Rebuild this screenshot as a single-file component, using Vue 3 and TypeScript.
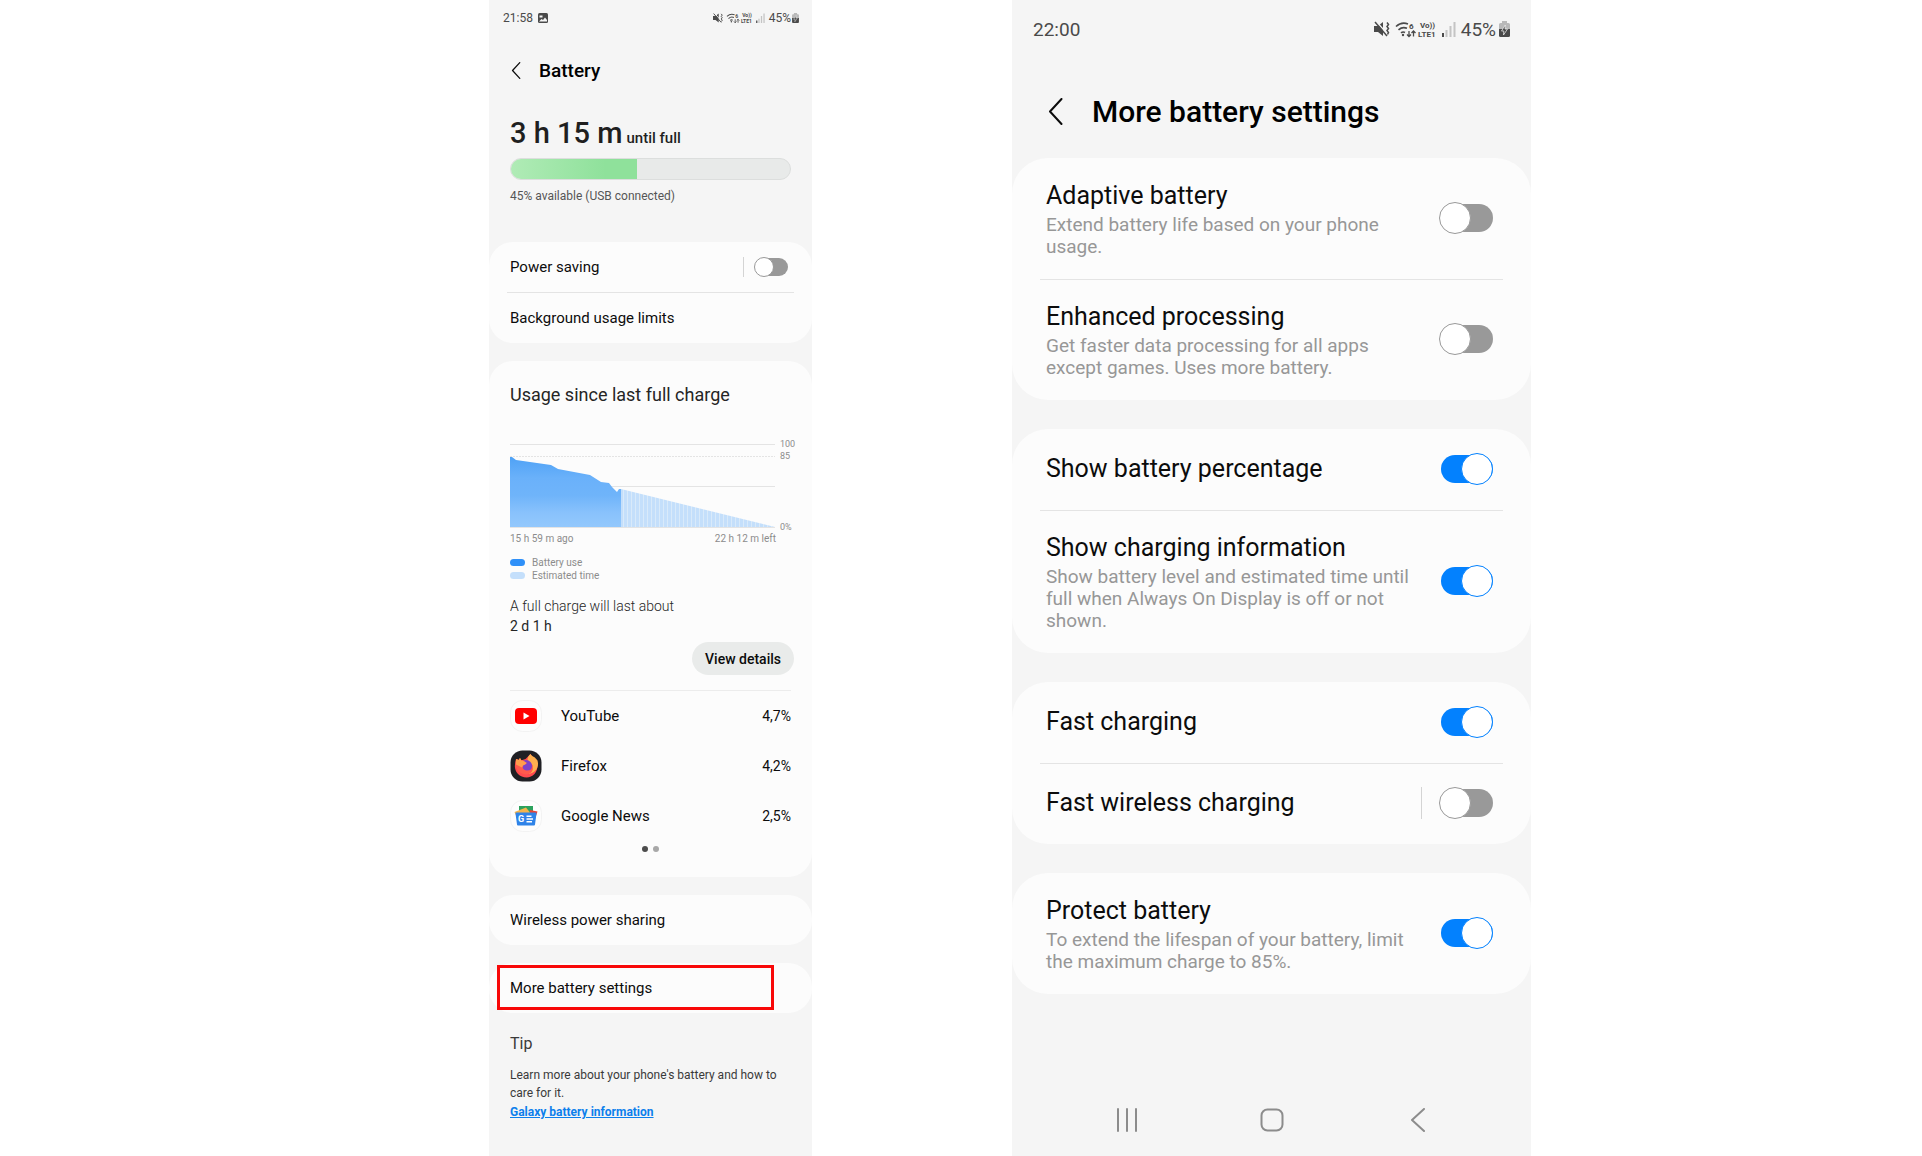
<script setup lang="ts">
import { ref } from 'vue'

interface Setting {
  id: string
  title: string
  detail?: string
  on: boolean
  split?: boolean
}

interface AppUsage {
  id: 'youtube' | 'firefox' | 'news'
  name: string
  share: string
}

const charge = ref(45)
const powerSaving = ref(false)

const apps: AppUsage[] = [
  { id: 'youtube', name: 'YouTube', share: '4,7%' },
  { id: 'firefox', name: 'Firefox', share: '4,2%' },
  { id: 'news', name: 'Google News', share: '2,5%' },
]

const groups = ref<Setting[][]>([
  [
    { id: 'adaptive', title: 'Adaptive battery', detail: 'Extend battery life based on your phone usage.', on: false },
    { id: 'enhanced', title: 'Enhanced processing', detail: 'Get faster data processing for all apps except games. Uses more battery.', on: false },
  ],
  [
    { id: 'percentage', title: 'Show battery percentage', on: true },
    { id: 'charging-info', title: 'Show charging information', detail: 'Show battery level and estimated time until full when Always On Display is off or not shown.', on: true },
  ],
  [
    { id: 'fast', title: 'Fast charging', on: true },
    { id: 'fast-wireless', title: 'Fast wireless charging', on: false, split: true },
  ],
  [
    { id: 'protect', title: 'Protect battery', detail: 'To extend the lifespan of your battery, limit the maximum charge to 85%.', on: true },
  ],
])
</script>

<template>
  <div class="page">
    <svg class="defs" aria-hidden="true">
      <symbol id="signals" viewBox="0 0 82 18">
        <path d="M0 6h4l5-4v14l-5-4H0z" fill="#4a4a4a" />
        <path d="M2 1l12 14" stroke="#f5f5f5" stroke-width="1.500" />
        <path d="M1 2l12 14" stroke="#4a4a4a" stroke-width="1.500" />
        <path d="M13 2.500l1.500 2L13 6.500l1.500 2-1.500 2 1.500 2-1 2" fill="none" stroke="#4a4a4a" stroke-width="1.500" />
        <g fill="none" stroke="#4a4a4a" stroke-width="1.600">
          <path d="M22 6.500q5.500-5 12-2.500M24.500 9.800q4-3.500 8.500-1.500M27 12.800q2-1.500 4-.3" />
          <path d="M35 11v5.500M33 14.500l2 2 2-2M39.500 16.500V11M37.500 13l2-2 2 2" stroke-width="1.300" />
        </g>
        <circle cx="29" cy="15" r="1.200" fill="#4a4a4a" />
        <path d="M68 13h2v4h-2z" fill="#4a4a4a" />
        <path d="M71.500 10h2v7h-2zM75.500 6h2v11h-2zM79.500 2h2v15h-2z" fill="#c4c4c4" />
      </symbol>
      <symbol id="cell" viewBox="0 0 11 16">
        <path d="M3 0h5v2h1.500Q11 2 11 3.500V9H0V3.500Q0 2 1.500 2H3z" fill="#b9b9b9" />
        <path d="M0 8h11v6.500Q11 16 9.500 16h-8Q0 16 0 14.500z" fill="#4a4a4a" />
        <path d="M6.300 4L2.500 10h2.300L4.500 14l4-6H6z" fill="#4a4a4a" stroke="#f5f5f5" stroke-width=".7" />
      </symbol>
      <symbol id="back" viewBox="0 0 14 27">
        <path d="M13 1L1.500 13.500 13 26" fill="none" stroke="currentColor" stroke-width="2" stroke-linecap="round" stroke-linejoin="round" />
      </symbol>
      <symbol id="youtube" viewBox="0 0 32 32">
        <rect x=".5" y=".5" width="31" height="31" rx="12" fill="#fdfdfd" stroke="#f3f3f3" />
        <rect x="5" y="8" width="22" height="16" rx="4" fill="#f00" />
        <path d="M13.500 12.500v7l6-3.500z" fill="#fff" />
      </symbol>
      <symbol id="firefox" viewBox="0 0 32 32">
        <rect x=".5" y=".5" width="31" height="31" rx="12" fill="#202024" />
        <path d="M7 9c-3 5-3 11 1 15s12 5 16.500 0C29 19 28 11 24.500 8.500c-2-1.500-3-2.500-4-4.500l-5 5-6 2z" fill="#ff4a4e" />
        <path d="M20.500 4c-2 1.500-3 4-3 6l5 5c1 4-1 7-4 9 7-.5 11-7 9-13.500-1-1.500-2.500-3-3.500-3.500-2-1-3-2-3.500-3z" fill="#ffb04f" />
        <circle cx="16" cy="16" r="6" fill="#7d42c8" />
        <path d="M6 9l2.500 1 1.500-2 1.500 2.500c1.500 0 2.500.5 3.500 1.500 2 .5 2 1.500 0 2.500l-2 1c-1 3 1 5 4 5 3.500 0 5-1 6-3 0 5-4 7-7 7C8 24 3.500 17 6 9z" fill="#ff5a4d" />
        <path d="M6 9l2.500 1 1.500-2 1.500 2.500c1.500 0 2.500.5 3.500 1.500 2 .5 2 1.500 0 2.500l-2 1-1 2-6-3z" fill="#ff9d4c" />
      </symbol>
      <symbol id="news" viewBox="0 0 32 32">
        <rect x=".5" y=".5" width="31" height="31" rx="12" fill="#fdfdfd" stroke="#f3f3f3" />
        <path d="M9 6h14v8H9z" fill="#2ca25c" />
        <path d="M20 10l7.500 1.500-3 9-5-3z" fill="#ec4335" />
        <path d="M4.500 12L16 7.500l4 5L8 20z" fill="#f4b44c" />
        <path d="M6.500 12.500h19q1 0 1 1L25 24.500q0 1-1 1H8q-1 0-1-1L5.500 13.500q0-1 1-1z" fill="#2f83e8" />
        <path d="M16.500 15.500h5v1.500h-5zM16.500 18.200H23v1.500h-6.500zM16.500 21h5.500v1.500h-5.500z" fill="#fff" />
      </symbol>
    </svg>

    <main class="phone small">
      <div class="status">
        <span>21:58</span>
        <svg class="picture" viewBox="0 0 10 10" aria-hidden="true">
          <rect width="10" height="10" rx="1.500" fill="#4a4a4a" />
          <path d="M1.500 2.500h3v2h-3zM1 8.500l2.500-2.500 1.500 1 2-2.500L9 7v1.500z" fill="#f5f5f5" />
        </svg>
        <svg class="signals" viewBox="0 0 82 18" aria-hidden="true">
          <use href="#signals" width="82" height="18" />
          <text x="35" y="9">6</text>
          <text x="46" y="8">Vo))</text>
          <text x="44" y="17">LTE1</text>
        </svg>
        <span>{{ charge }}%</span>
        <svg class="cell" aria-hidden="true"><use href="#cell" /></svg>
      </div>
      <header class="bar">
        <button class="back" aria-label="Back"><svg aria-hidden="true"><use href="#back" /></svg></button>
        <h1>Battery</h1>
      </header>

      <section class="summary">
        <p class="remaining"><strong>3 h 15 m</strong><span>until full</span></p>
        <div class="meter" role="meter" aria-label="Battery level" :aria-valuenow="charge" aria-valuemin="0" aria-valuemax="100">
          <div class="level" :style="{ width: charge + '%' }"></div>
        </div>
        <p class="available">45% available (USB connected)</p>
      </section>

      <section class="card">
        <div class="row">
          <label for="power-saving">Power saving</label>
          <span class="split"></span>
          <input id="power-saving" v-model="powerSaving" class="switch" type="checkbox" role="switch" />
        </div>
        <button class="row">Background usage limits</button>
      </section>

      <section class="card usage">
        <h2>Usage since last full charge</h2>
        <svg class="chart" viewBox="0 0 290 91" role="img" aria-label="Battery level over time">
          <defs>
            <linearGradient id="used" x1="0" y1="0" x2="0" y2="1">
              <stop offset="0" stop-color="#4fa2f6" />
              <stop offset=".3" stop-color="#6ab1fa" />
              <stop offset=".55" stop-color="#6fb4fa" />
              <stop offset=".8" stop-color="#89c2fc" />
              <stop offset="1" stop-color="#93c8fc" />
            </linearGradient>
            <pattern id="hatch" width="4" height="4" patternUnits="userSpaceOnUse">
              <rect width="4" height="4" fill="#c4dffb" />
              <rect x="1" width="1" height="4" fill="#d9eafa" />
            </pattern>
          </defs>
          <g stroke="#e4e4e4">
            <path d="M0 4.500h265M0 87.500h265" />
            <path d="M0 16.500h265" stroke-dasharray="2 1" />
            <path d="M0 46.500h265" />
          </g>
          <path d="M0 17h2l4 3 35 5 7 4 32 6 11 7 8 1 3 4 5 5 2-3h2v38H0z" fill="url(#used)" />
          <path d="M111 49l154 38H111z" fill="url(#hatch)" />
          <g class="ticks">
            <text x="270" y="7">100</text>
            <text x="270" y="19">85</text>
            <text x="270" y="90">0%</text>
          </g>
        </svg>
        <div class="range"><span>15 h 59 m ago</span><span>22 h 12 m left</span></div>
        <ul class="legend">
          <li><i class="use"></i>Battery use</li>
          <li><i></i>Estimated time</li>
        </ul>
        <p class="lasts"><span>A full charge will last about</span><br />2 d 1 h</p>
        <div class="details"><button>View details</button></div>
        <ul class="apps">
          <li v-for="app in apps" :key="app.id">
            <svg viewBox="0 0 32 32" aria-hidden="true">
              <use :href="'#' + app.id" width="32" height="32" />
              <text v-if="app.id === 'news'" x="8" y="22">G</text>
            </svg>
            <span>{{ app.name }}</span>
            <b>{{ app.share }}</b>
          </li>
        </ul>
        <div class="dots"><i class="current"></i><i></i></div>
      </section>

      <section class="card"><button class="row">Wireless power sharing</button></section>
      <section class="card marked"><button class="row">More battery settings</button></section>

      <section class="tip">
        <h2>Tip</h2>
        <p>Learn more about your phone's battery and how to care for it.</p>
        <a href="#">Galaxy battery information</a>
      </section>
    </main>

    <main class="phone large">
      <div class="status">
        <span>22:00</span>
        <svg class="signals" viewBox="0 0 82 18" aria-hidden="true">
          <use href="#signals" width="82" height="18" />
          <text x="35" y="9">6</text>
          <text x="46" y="8">Vo))</text>
          <text x="44" y="17">LTE1</text>
        </svg>
        <span>{{ charge }}%</span>
        <svg class="cell" aria-hidden="true"><use href="#cell" /></svg>
      </div>
      <header class="bar">
        <button class="back" aria-label="Back"><svg aria-hidden="true"><use href="#back" /></svg></button>
        <h1>More battery settings</h1>
      </header>
      <section v-for="(group, index) in groups" :key="index" class="card">
        <div v-for="setting in group" :key="setting.id" class="row">
          <label :for="setting.id">
            <span class="title">{{ setting.title }}</span>
            <span v-if="setting.detail" class="detail">{{ setting.detail }}</span>
          </label>
          <span v-if="setting.split" class="split"></span>
          <input :id="setting.id" v-model="setting.on" class="switch" type="checkbox" role="switch" />
        </div>
      </section>
      <nav>
        <button aria-label="Recent apps">
          <svg viewBox="0 0 24 24" aria-hidden="true"><path d="M3 1v22M12 1v22M21 1v22" /></svg>
        </button>
        <button aria-label="Home">
          <svg viewBox="0 0 24 24" aria-hidden="true"><rect x="1.500" y="1.500" width="21" height="21" rx="6" /></svg>
        </button>
        <button aria-label="Back">
          <svg viewBox="0 0 24 24" aria-hidden="true"><path d="M20 1L8 12 20 23" /></svg>
        </button>
      </nav>
    </main>
  </div>
</template>

<style>
body {
  margin: 0;
  background: #fff;
}
</style>

<style scoped>
.page {
  display: grid;
  grid-template-columns: 489fr 323fr 200fr 519fr 391fr;
  min-height: 100vh;
  font-family: Roboto, 'Liberation Sans', sans-serif;
  color: #0c0c0c;
}
.defs {
  position: absolute;
  width: 0;
  height: 0;
}
h1, h2, p, ul {
  margin: 0;
  padding: 0;
  list-style: none;
}
h1, h2 {
  font-weight: 400;
}
button {
  border: 0;
  padding: 0;
  background: none;
  font: inherit;
  color: inherit;
  text-align: left;
  cursor: pointer;
}
svg {
  display: block;
  flex: none;
}
.phone {
  display: flex;
  flex-direction: column;
  min-width: 0;
  background: #f5f5f5;
}
.small {
  grid-column: 2;
  font-size: 15px;
}
.large {
  grid-column: 4;
}

/* status bar and heading */
.status {
  display: flex;
  align-items: center;
  color: #4a4a4a;
}
.signals {
  margin-left: auto;
}
.signals text {
  font-size: 8px;
  font-weight: 700;
  fill: #4a4a4a;
}
.small .status {
  height: 36px;
  padding: 0 13px 0 14px;
  font-size: 12px;
}
.small .picture {
  width: 10px;
  height: 10px;
  margin-left: 5px;
}
.small .signals {
  width: 52px;
  height: 12px;
  margin-right: 4px;
}
.small .cell {
  width: 7px;
  height: 10px;
  margin-left: 1px;
}
.large .status {
  height: 58px;
  padding: 0 21px;
  font-size: 19px;
}
.large .signals {
  width: 82px;
  height: 18px;
  margin-right: 5px;
}
.large .cell {
  width: 11px;
  height: 16px;
  margin-left: 3px;
}
.bar {
  display: flex;
  align-items: center;
}
.bar h1 {
  font-weight: 500;
  color: #000;
}
.small .bar {
  height: 68px;
  padding-left: 22px;
  gap: 18px;
}
.small .bar h1 {
  font-size: 19px;
}
.small .back svg {
  width: 10px;
  height: 17px;
}
.large .bar {
  height: 100px;
  padding: 7px 0 0 36px;
  box-sizing: border-box;
  gap: 29px;
}
.large .bar h1 {
  font-size: 30px;
}
.large .back svg {
  width: 15px;
  height: 27px;
}

/* cards and rows */
.card {
  background: #fcfcfc;
}
.small .card {
  border-radius: 24px;
  margin-bottom: 18px;
}
.large .card {
  border-radius: 36px;
  margin-bottom: 29px;
}
.row {
  display: flex;
  align-items: center;
  width: 100%;
  box-sizing: border-box;
  position: relative;
}
.row label {
  flex: 1;
}
.row + .row::before {
  content: '';
  position: absolute;
  top: 0;
  height: 1px;
  background: #e4e4e4;
}
.small .row {
  height: 50px;
  padding: 0 24px 0 21px;
}
.small .row + .row {
  height: 51px;
}
.small .row + .row::before {
  left: 18px;
  right: 18px;
}
.large .row {
  min-height: 81px;
  padding: 20px 38px 21px 34px;
}
.large .row + .row::before {
  left: 28px;
  right: 28px;
}
.title, .detail {
  display: block;
}
.title {
  font-size: 25px;
  line-height: 36px;
}
.detail {
  font-size: 19px;
  line-height: 22px;
  color: #979797;
}
.large label {
  margin-right: 28px;
}
.split {
  width: 1px;
  background: #d4d4d4;
}
.small .split {
  height: 20px;
  margin-right: 10px;
}
.large .split {
  height: 32px;
  margin-right: 17px;
}
.switch {
  --w: 54px;
  --h: 32px;
  --inset: 2px;
  --tone: #999;
  appearance: none;
  position: relative;
  flex: none;
  width: var(--w);
  height: var(--h);
  margin: 0;
}
.small .switch {
  --w: 34px;
  --h: 20px;
  --inset: 1px;
}
.switch:checked {
  --tone: #0381fe;
}
.switch::before {
  content: '';
  position: absolute;
  inset: var(--inset) 0 var(--inset) 2px;
  border-radius: var(--h);
  background: var(--tone);
}
.switch::after {
  content: '';
  position: absolute;
  left: 0;
  top: 0;
  width: var(--h);
  height: var(--h);
  box-sizing: border-box;
  border: 1px solid var(--tone);
  border-radius: 50%;
  background: #fff;
}
.switch:checked::after {
  left: auto;
  right: 0;
}

/* charge summary */
.summary {
  padding: 11px 21px 38px;
}
.remaining {
  display: flex;
  align-items: baseline;
  gap: 4px;
  height: 36px;
  font-weight: 500;
  font-size: 15px;
  line-height: 36px;
  color: #1f1f1f;
}
.remaining strong {
  font-weight: 500;
  font-size: 29px;
}
.meter {
  margin: 7px 0 8px;
  height: 22px;
  box-sizing: border-box;
  border: 1px solid #dcdedd;
  border-radius: 11px;
  background: #e8eae9;
  overflow: hidden;
}
.level {
  height: 100%;
  background: linear-gradient(90deg, #b0ebb6, #8fe19b 75%);
}
.available {
  font-size: 12px;
  line-height: 16px;
  color: #555;
}

/* usage card */
.usage {
  padding: 22px 21px 25px;
}
.usage h2 {
  font-size: 18px;
  line-height: 24px;
  color: #252525;
}
.chart {
  width: calc(100% + 9px);
  margin-top: 33px;
}
.ticks {
  font-size: 9px;
  fill: #8c8c8c;
}
.range {
  display: flex;
  justify-content: space-between;
  margin: 2px 15px 11px 0;
  font-size: 10px;
  line-height: 12px;
  color: #8c8c8c;
}
.legend li {
  display: flex;
  align-items: center;
  gap: 7px;
  font-size: 10px;
  line-height: 13px;
  color: #8c8c8c;
}
.legend i {
  width: 15px;
  height: 7px;
  border-radius: 4px;
  background: #c4dffb;
}
.legend .use {
  background: #2f90f8;
}
.lasts {
  margin: 14px 0 6px;
  font-size: 14px;
  line-height: 20px;
  color: #252525;
}
.lasts span {
  font-weight: 300;
}
.details {
  display: flex;
  justify-content: flex-end;
  margin-right: -3px;
  padding-bottom: 15px;
}
.details button {
  height: 33px;
  padding: 0 13px;
  border-radius: 17px;
  background: #e9ebea;
  font-size: 14px;
  font-weight: 500;
}
.apps {
  border-top: 1px solid #ececec;
}
.apps li {
  display: flex;
  align-items: center;
  height: 50px;
}
.apps svg {
  width: 32px;
  height: 32px;
  margin-right: 19px;
}
.apps text {
  font-size: 9px;
  font-weight: 700;
  fill: #fff;
}
.apps b {
  margin-left: auto;
  font-size: 14px;
  font-weight: 400;
}
.dots {
  display: flex;
  justify-content: center;
  gap: 5px;
  margin-top: 5px;
}
.dots i {
  width: 6px;
  height: 6px;
  border-radius: 50%;
  background: #a8a8a8;
}
.dots .current {
  background: #4c4c4c;
}

/* highlighted entry */
.marked {
  position: relative;
}
.marked::after {
  content: '';
  position: absolute;
  inset: 2px 38px 3px 8px;
  border: 3px solid #f80808;
  pointer-events: none;
}
.tip {
  padding: 3px 20px 20px 21px;
  font-size: 12px;
  line-height: 18px;
  color: #3a3a3a;
}
.tip h2 {
  margin-bottom: 12px;
  font-size: 16px;
  line-height: 20px;
}
.tip a {
  display: inline-block;
  margin-top: 1px;
  font-weight: 700;
  color: #0d7fec;
}

/* navigation buttons */
nav {
  display: flex;
  justify-content: space-between;
  margin-top: auto;
  padding: 0 103px 24px;
}
nav svg {
  width: 24px;
  height: 24px;
  fill: none;
  stroke: #8c8c8c;
  stroke-width: 2;
  stroke-linecap: round;
  stroke-linejoin: round;
}
</style>
